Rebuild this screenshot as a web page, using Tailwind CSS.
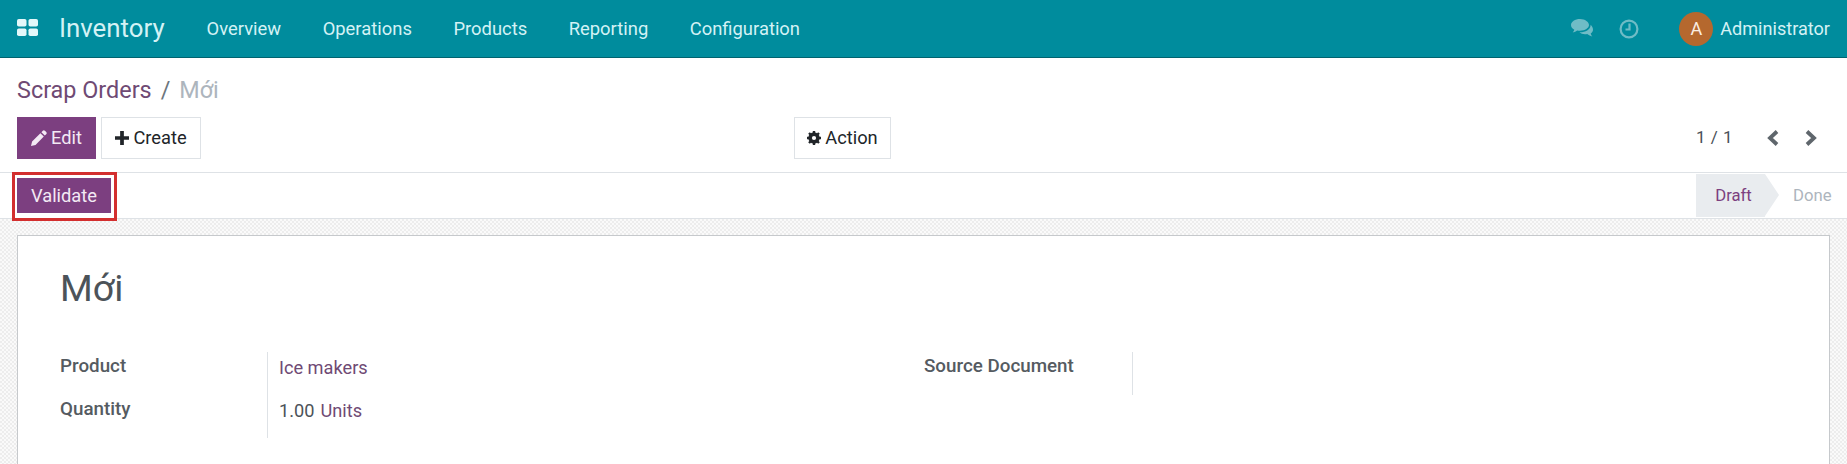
<!DOCTYPE html>
<html lang="vi">
<head>
  <meta charset="UTF-8">
  <title>Scrap Orders</title>
  <script src="https://cdn.jsdelivr.net/npm/@tailwindcss/browser@4"></script>
</head>
<body class="bg-white font-['Roboto',sans-serif] text-[#212529] overflow-hidden h-[464px]">

  <!-- Navbar -->
  <header class="h-[58px] bg-[#008c9d] border-b border-[#00636f] flex items-center text-[#d4f2f5] text-[18.400px]">
    <svg class="ml-[17px] -mt-[2px] w-[21px] h-[17px]" viewBox="0 0 21 17" fill="#e3f8fa">
      <rect x="0" y="0" width="9.500" height="7.500" rx="1.800"/><rect x="11.500" y="0" width="9.500" height="7.500" rx="1.800"/>
      <rect x="0" y="9.500" width="9.500" height="7.500" rx="1.800"/><rect x="11.500" y="9.500" width="9.500" height="7.500" rx="1.800"/>
    </svg>
    <span class="ml-[21px] text-[25.800px]">Inventory</span>
    <nav class="ml-[42px] flex gap-[41.500px]">
      <a>Overview</a><a>Operations</a><a>Products</a><a>Reporting</a><a>Configuration</a>
    </nav>
    <div class="ml-auto flex items-center pr-[17px]">
      <svg class="w-[23px] h-[19px]" viewBox="0 0 23 19" fill="#6fbcc6">
        <path d="M9 0C4 0 0 2.700 0 6c0 1.900 1.300 3.600 3.300 4.700-.3 1-.9 1.800-1.600 2.600 1.600-.2 3.200-.9 4.400-1.900.9.2 1.900.3 2.900.3 5 0 9-2.700 9-5.700S14 0 9 0z"/>
        <path d="M19.500 5.800c.1.400.1.800 0 1.200-.6 3.500-4.700 6.300-10.500 6.300h-.6c1.300 1.300 3.400 2 5.600 2 .8 0 1.500-.1 2.200-.2 1.500 1.300 3.200 1.900 5.100 2.300-.7-.8-1.300-1.800-1.600-3 1.500-.9 2.300-2.200 2.300-3.700 0-1.900-1-3.500-2.500-4.900z"/>
      </svg>
      <svg class="ml-[25px] w-[20px] h-[20px]" viewBox="0 0 20 20" fill="none" stroke="#6fbcc6" stroke-width="2.200">
        <circle cx="10" cy="10" r="8.400"/><path d="M10.500 4.500v6H6.500"/>
      </svg>
      <span class="ml-[40px] w-[34px] h-[34px] rounded-full bg-[#b5682e] text-[#fbeee2] flex items-center justify-center text-[18px]">A</span>
      <span class="ml-[7px] text-[18.100px]">Administrator</span>
    </div>
  </header>

  <!-- Control panel -->
  <section class="border-b border-[#dee2e6]">
    <div class="h-[59px] pt-[6px] pl-[17px] flex items-center text-[23.400px]">
      <span class="text-[#6f4a74]">Scrap Orders</span>
      <span class="mx-[9px] text-[#6c757d]">/</span>
      <span class="text-[#adb5bd]">Mới</span>
    </div>
    <div class="pl-[17px] pr-[30px] pb-[13px] flex items-center text-[18.300px]">
      <div class="w-[777px] flex gap-[5px]">
        <button class="h-[42px] w-[79px] bg-[#7c3f80] text-[#f3e9f4] flex items-center justify-center gap-[4px]">
          <svg class="w-[16px] h-[16px]" viewBox="0 0 16 16" fill="#f3e9f4"><path d="M11.800.8a1.500 1.500 0 0 1 2.100 0l1.300 1.300a1.500 1.500 0 0 1 0 2.100l-1.400 1.400-3.400-3.400zM9.400 3.200l3.400 3.400-8.300 8.300L0 16l1.100-4.500z"/></svg>
          Edit
        </button>
        <button class="h-[42px] w-[100px] border border-[#dee2e6] text-[#212529] flex items-center justify-center gap-[4px]">
          <svg class="w-[14px] h-[14px]" viewBox="0 0 15 15" fill="#212529"><path d="M5.500 0h4v5.500H15v4H9.500V15h-4V9.500H0v-4h5.500z"/></svg>
          Create
        </button>
      </div>
      <button class="h-[42px] w-[97px] border border-[#dee2e6] flex items-center justify-center gap-[4px]">
        <svg class="w-[14px] h-[14px]" viewBox="0 0 14 14"><circle cx="7" cy="7" r="4.300" fill="none" stroke="#212529" stroke-width="2.800"/><path d="M7 0v14M0 7h14M2 2l10 10M12 2 2 12" stroke="#212529" stroke-width="2.400"/><circle cx="7" cy="7" r="2.100" fill="#fff"/></svg>
        Action
      </button>
      <div class="ml-auto flex items-center text-[#495057]">
        <span class="text-[17px] tracking-[0.5px]">1 / 1</span>
        <svg class="ml-[34px] w-[12px] h-[16px]" viewBox="0 0 12 16" fill="none" stroke="#5f666c" stroke-width="3.800"><path d="M10 1.500 3 8l7 6.500"/></svg>
        <svg class="ml-[26px] w-[12px] h-[16px]" viewBox="0 0 12 16" fill="none" stroke="#5f666c" stroke-width="3.800"><path d="M2 1.500 9 8l-7 6.500"/></svg>
      </div>
    </div>
  </section>

  <!-- Status bar -->
  <section class="h-[45px] flex items-center justify-between pl-[17px] text-[16.700px]">
    <div class="relative">
      <button class="h-[35px] w-[94px] bg-[#7c3f80] text-[#f3e9f4] flex items-center justify-center text-[18.300px]">Validate</button>
      <div class="absolute -left-[5px] -top-[6px] w-[105px] h-[49px] border-[3px] border-[#d32f2f]"></div>
    </div>
    <div class="flex items-center h-[43px] self-start mt-[1px]">
      <div class="relative h-full w-[69px] pl-[6px] bg-[#e9ecef] flex items-center justify-center text-[#7c3f80]">
        Draft
        <span class="absolute left-full top-0 border-y-[21.500px] border-y-transparent border-l-[14px] border-l-[#e9ecef]"></span>
      </div>
      <span class="ml-[28px] mr-[16px] w-[38px] text-[#adb5bd] whitespace-nowrap">Done</span>
    </div>
  </section>

  <!-- Sheet -->
  <main class="px-[17px] pt-[16px] h-[246px] border-t border-[#dee2e6] bg-[repeating-conic-gradient(#ededed_0_25%,#fafafa_0_50%)] bg-[length:4px_4px]">
    <div class="h-full bg-white border border-b-0 border-[#c6c9cc] pl-[42px] pt-[30px] text-[#4c5359]">
      <h1 class="text-[37.500px] leading-[44px]">Mới</h1>
      <div class="mt-[42px] flex text-[18.200px]">
        <div class="w-[864px] flex">
          <div class="w-[207px] font-medium text-[18.800px] leading-[28px] text-[#555b61]">
            <div class="h-[43px]">Product</div>
            <div class="h-[43px]">Quantity</div>
          </div>
          <div class="border-l border-[#dee2e6] pl-[11px] h-[86px] leading-[31px]">
            <div class="h-[43px] text-[#6f4a74]">Ice makers</div>
            <div class="h-[43px] flex gap-[6px]">1.00 <span class="text-[#6f4a74]">Units</span></div>
          </div>
        </div>
        <div class="w-[209px] font-medium text-[18.800px] leading-[28px] text-[#555b61] border-r border-[#dee2e6] h-[43px]">Source Document</div>
      </div>
    </div>
  </main>
</body>
</html>
